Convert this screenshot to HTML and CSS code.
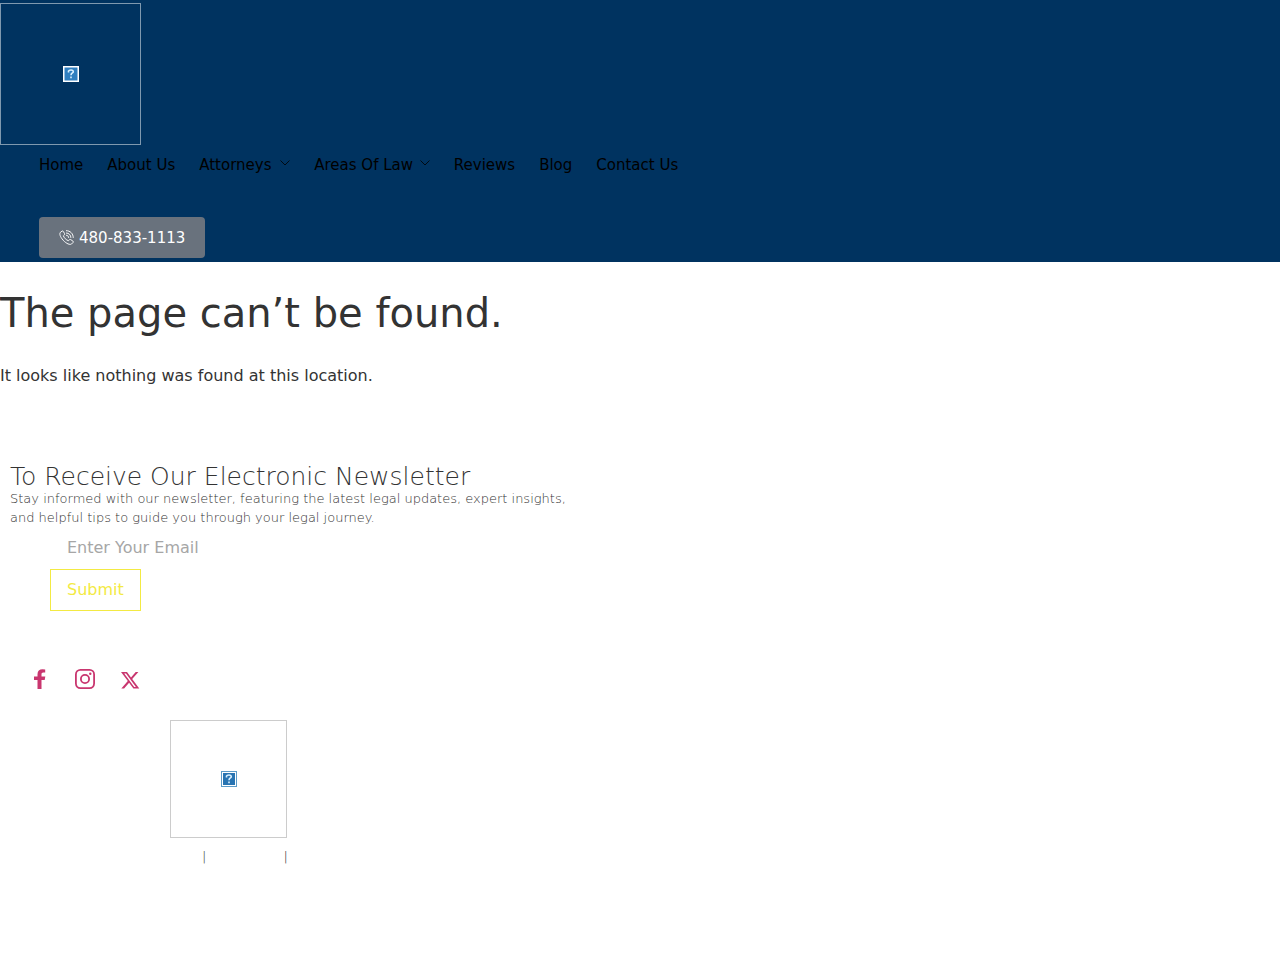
FILE: index.html
```html
<!DOCTYPE html>
<html lang="en">
<head>
<meta charset="utf-8">
<meta name="viewport" content="width=device-width, initial-scale=1">
<title>Page not found</title>
<link rel="stylesheet" href="styles.css">
</head>
<body>
<svg class="defs" aria-hidden="true">
  <symbol id="missing" viewBox="0 0 16 16">
    <path fill="#5b9bc8" d="M0 0h16v16H0z"/>
    <path fill="#fff" d="M1 1h14v14H1z"/>
    <path fill="#2874b2" d="M2 2h12v12H2z"/>
    <path fill="none" stroke="#d8f0ff" stroke-width="1.600" d="M5.500 6.500V5q.4-1 2.500-1 2.300 0 2.300 1.700C10.300 7 8 7 8 9.200M8 10.500v1.700"/>
  </symbol>
  <symbol id="missing-light" viewBox="0 0 16 16">
    <path fill="#fff" d="M0 0h16v16H0z"/>
    <path fill="#2f7fc0" d="M1.500 1.500h13v13h-13z"/>
    <path fill="none" stroke="#d8f0ff" stroke-width="1.600" d="M5.500 6.500V5q.4-1 2.500-1 2.300 0 2.300 1.700C10.300 7 8 7 8 9.200M8 10.500v1.700"/>
  </symbol>
  <symbol id="chevron" viewBox="0 0 10 6">
    <path fill="none" stroke="currentColor" stroke-width=".8" d="m.5.5 4.500 4.500L9.500.5"/>
  </symbol>
</svg>
<header class="header">
  <a class="logo logo-header" href="#" aria-label="Home page"><svg class="missing" aria-hidden="true"><use href="#missing-light"/></svg></a>
  <nav class="nav">
    <a href="#">Home</a>
    <a href="#">About Us</a>
    <a href="#">Attorneys <svg class="chevron chevron-wide" aria-hidden="true"><use href="#chevron"/></svg></a>
    <a href="#">Areas Of Law <svg class="chevron" aria-hidden="true"><use href="#chevron"/></svg></a>
    <a href="#">Reviews</a>
    <a href="#">Blog</a>
    <a href="#">Contact Us</a>
  </nav>
  <a class="phone" href="tel:4808331113">
    <svg class="phone-icon" viewBox="0 0 16 16" aria-hidden="true">
      <path d="M3.200 1.200 1.500 2.500C.2 4 1 7 4.500 11c3.700 3.800 7 5 8.800 4l1.700-1.700q.6-.8-.2-1.500l-2.400-1.600q-.8-.4-1.500.3l-.9.9C8 11 5 8 4.700 6.200l1-.9q.6-.7.2-1.500L4.600 1.500q-.6-.8-1.400-.3ZM7.500.7c4.500 0 7.700 3.200 7.700 7.700M7.500 3.200c3 0 5.200 2.200 5.200 5.200M7.500 5.600c1.700 0 2.800 1.100 2.800 2.800"/>
    </svg>
    480-833-1113
  </a>
</header>
<main class="main">
  <h1>The page can’t be found.</h1>
  <p>It looks like nothing was found at this location.</p>
</main>
<footer class="footer">
  <section class="newsletter">
    <h2>To Receive Our Electronic Newsletter</h2>
    <p>Stay informed with our newsletter, featuring the latest legal updates, expert insights, and helpful tips to guide you through your legal journey.</p>
    <form class="form">
      <input type="email" placeholder="Enter Your Email" aria-label="Email">
      <button type="submit">Submit</button>
    </form>
  </section>
  <div class="social">
    <a href="#" aria-label="Facebook"><svg viewBox="0 0 20 20" aria-hidden="true"><path fill="currentColor" d="M7.500 20v-9H4V7.400h3.500V5.200C7.500 1.800 9.400.2 12.500.2q1.700 0 2.700.2v3.200h-1.800c-1.500 0-1.900.8-1.900 2v1.800h3.800l-.6 3.600h-3.200v9Z"/></svg></a>
    <a href="#" aria-label="Instagram"><svg viewBox="0 0 20 20" aria-hidden="true"><g fill="none" stroke="currentColor" stroke-width="1.800"><rect x=".9" y=".9" width="18.200" height="18.200" rx="4.500"/><circle cx="10" cy="10" r="4.100"/></g><circle cx="15.300" cy="4.700" r="1.200" fill="currentColor"/></svg></a>
    <a href="#" aria-label="X"><svg viewBox="0 0 20 20" aria-hidden="true"><path fill="currentColor" fill-rule="evenodd" d="M1 3h6l4 5.400L15.700 3h2.700l-6.200 7.100L19.300 19.500h-5.900l-4.300-5.800-5 5.800H1.300l6.500-7.500Zm3.200 1.600 10 13.300h1.700L6 4.600Z"/></svg></a>
  </div>
  <div class="footer-brand">
    <a class="logo logo-footer" href="#" aria-label="Home page"><svg class="missing" aria-hidden="true"><use href="#missing"/></svg></a>
    <div class="separators"><span>|</span><span>|</span></div>
  </div>
</footer>
</body>
</html>
```

FILE: styles.css
```css
* { box-sizing: border-box; }
body {
  margin: 0;
  background: #fff;
  color: #333;
  font-family: "DejaVu Sans", sans-serif;
  font-size: 16px;
  line-height: 24px;
}
h1, h2, p { margin: 0; }
a { color: inherit; text-decoration: none; }
.defs { position: absolute; width: 0; height: 0; }

.header {
  display: flex;
  flex-direction: column;
  align-items: flex-start;
  padding: 3px 0 4px;
  background: #003360;
}
.logo {
  display: flex;
  align-items: center;
  justify-content: center;
}
.logo-header {
  width: 141px;
  height: 142px;
  border: 1px solid #7f99af;
}
.missing { width: 16px; height: 16px; }
.nav {
  display: flex;
  flex-wrap: wrap;
  gap: 24px;
  margin: 8px 0 40px 39px;
  color: #000;
  font-size: 15px;
}
.chevron {
  width: 10px;
  height: 6px;
  margin-left: 2px;
  vertical-align: 4px;
}
.chevron-wide { margin-left: 4px; }
.phone {
  display: flex;
  align-items: center;
  gap: 5px;
  margin-left: 39px;
  padding: 8px 20px;
  height: 41px;
  border-radius: 4px;
  background: #69727d;
  color: #fff;
  font-size: 15px;
}
.phone-icon {
  width: 15px;
  height: 15px;
  fill: none;
  stroke: currentColor;
  stroke-width: 1;
}

.main { padding-top: 27px; }
.main h1 {
  font-size: 40px;
  font-weight: 400;
  line-height: 48px;
}
.main p { margin-top: 27px; }

.newsletter {
  max-width: 600px;
  padding: 76px 10px 0;
}
.newsletter h2 {
  font-size: 25px;
  font-weight: 200;
  line-height: 25px;
}
.newsletter p {
  font-size: 13px;
  font-weight: 200;
  line-height: 19px;
}
.form {
  display: flex;
  flex-direction: column;
  align-items: flex-start;
  padding-left: 40px;
}
.form input {
  width: 240px;
  height: 42px;
  padding: 7px 17px 9px;
  border: 0;
  background: transparent;
  font: inherit;
}
.form input::placeholder { color: #a6a6a6; opacity: 1; }
.form button {
  height: 42px;
  padding: 8px 16px;
  border: 1px solid #f3ea43;
  background: transparent;
  color: #f3ea43;
  font: inherit;
}
.social {
  display: flex;
  gap: 25px;
  padding: 58px 30px 0;
  color: #c9366f;
}
.social svg { display: block; width: 20px; height: 20px; }
.footer-brand { padding: 31px 0 0 170px; }
.logo-footer {
  width: 117px;
  height: 118px;
  border: 1px solid #ccc;
}
.separators {
  display: flex;
  gap: 77px;
  padding: 7px 0 0 32px;
  font-size: 13px;
  font-weight: 200;
}
```
